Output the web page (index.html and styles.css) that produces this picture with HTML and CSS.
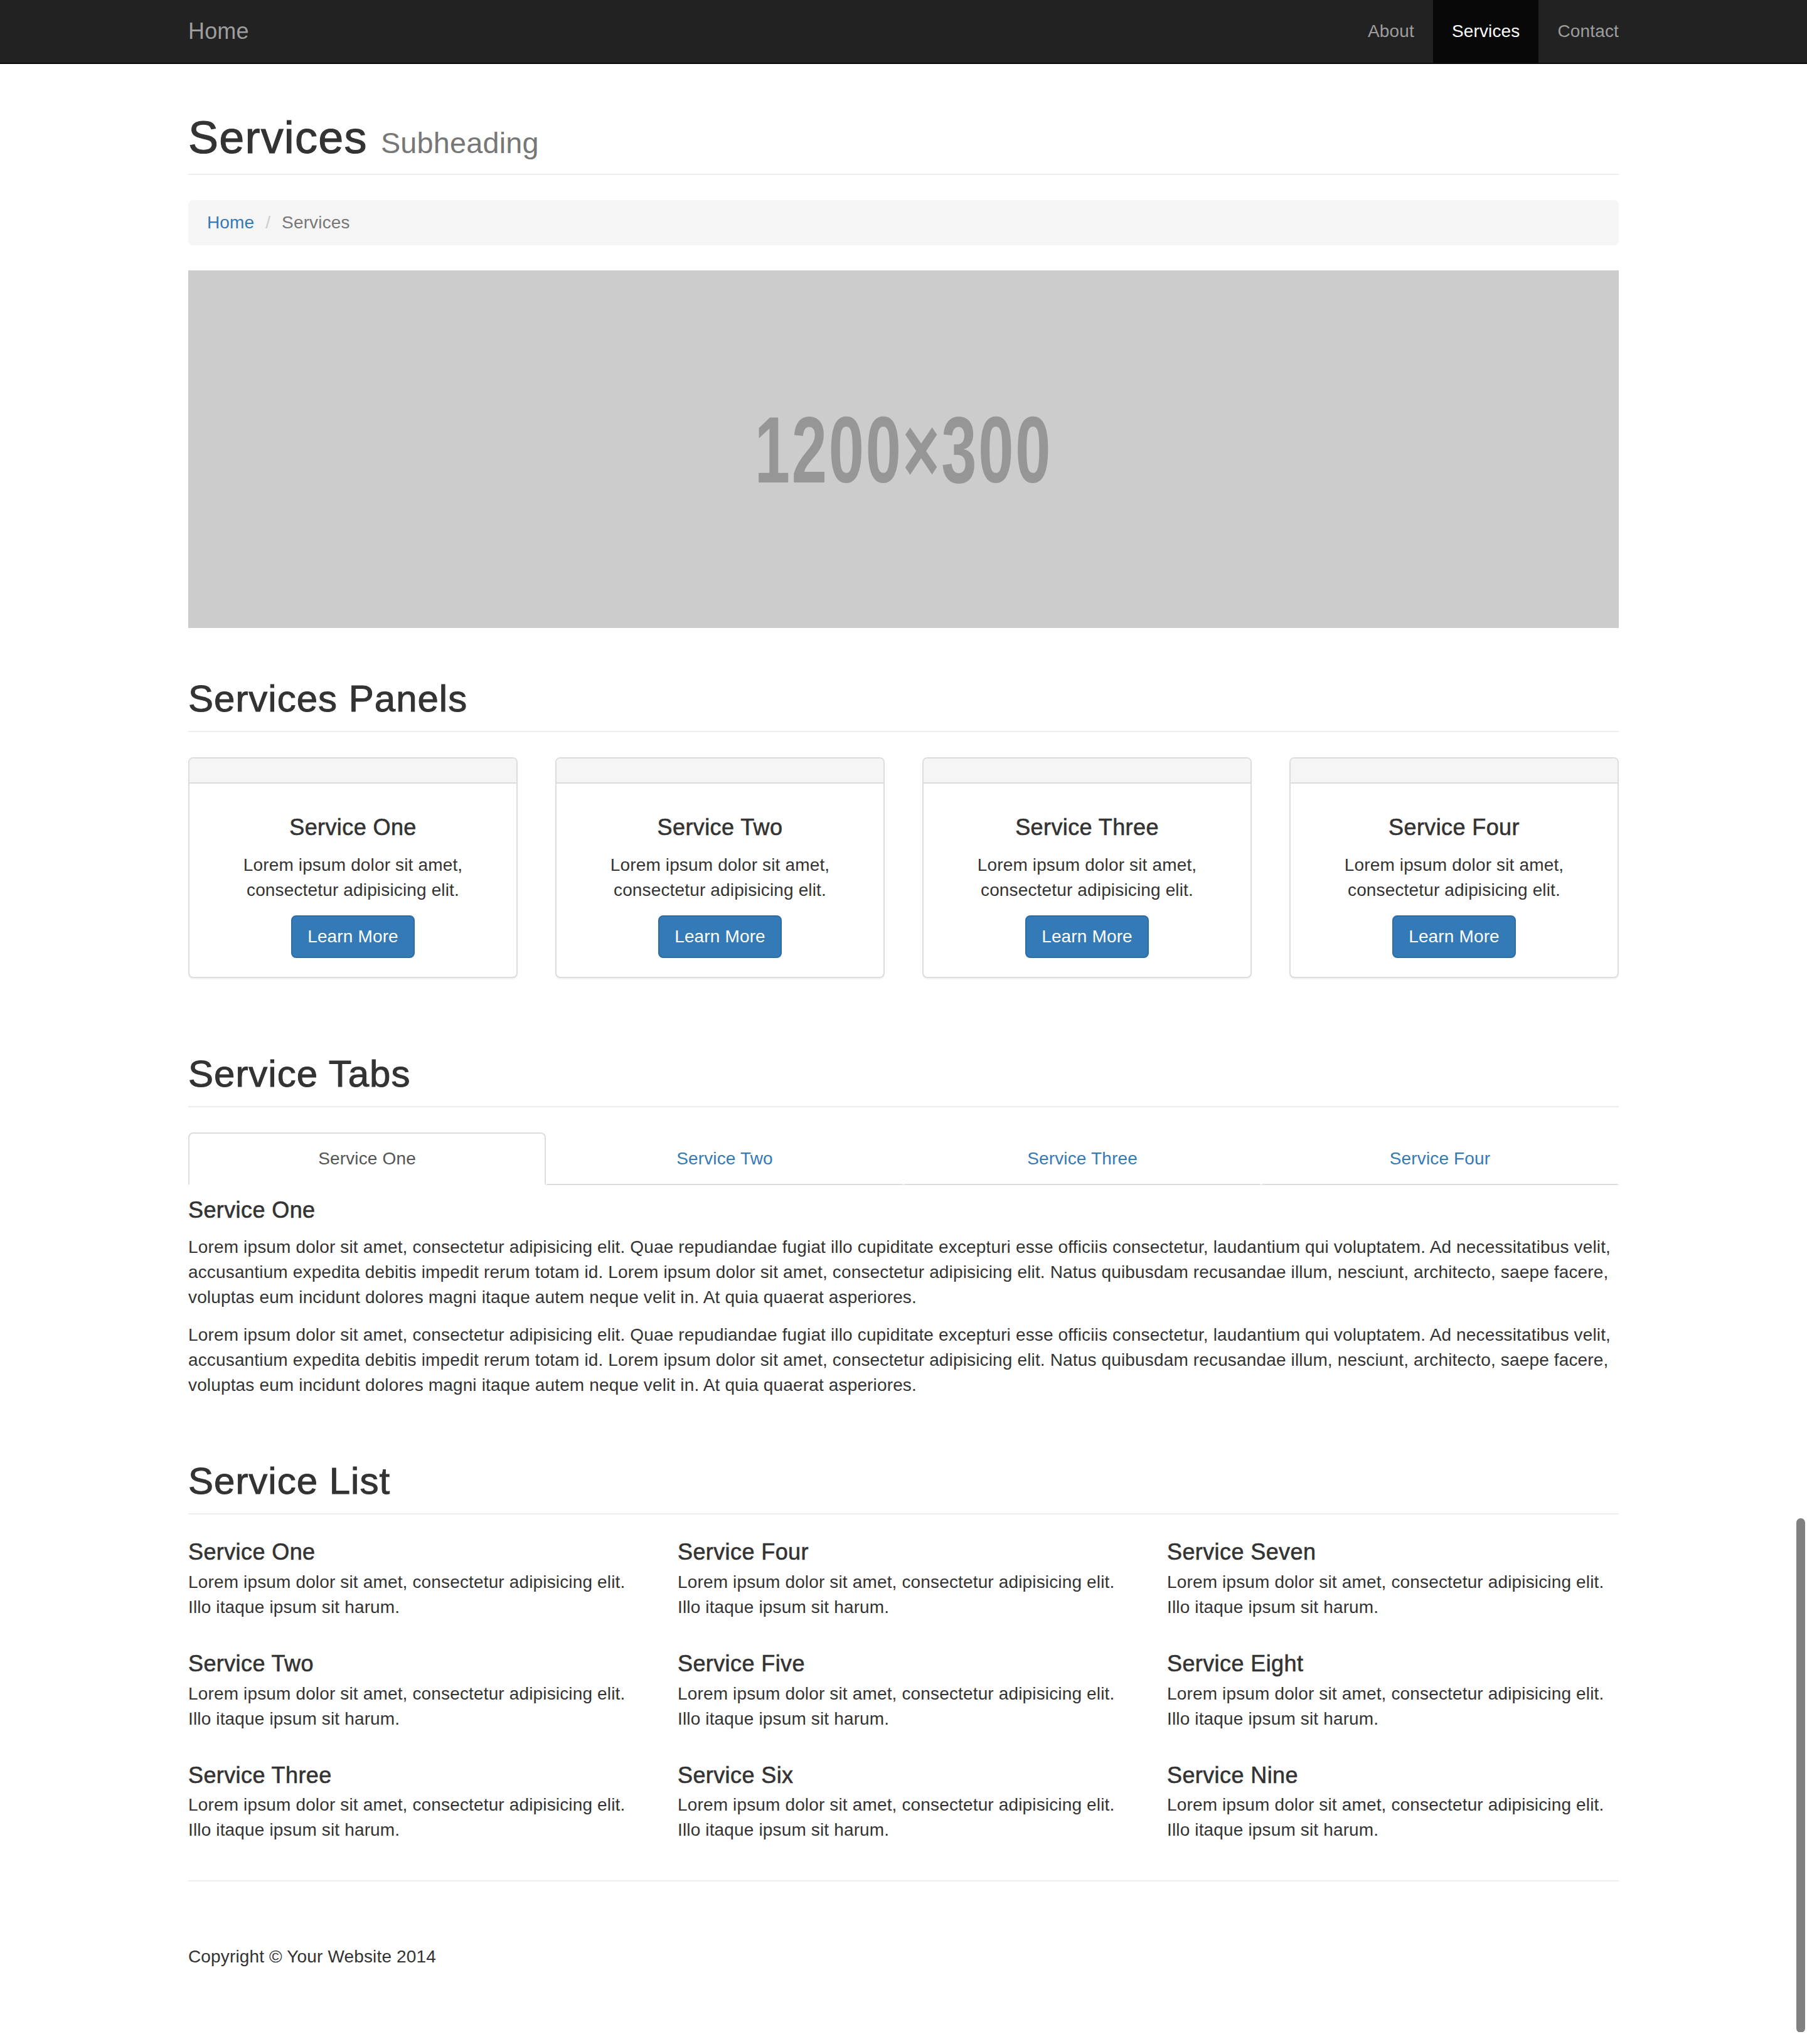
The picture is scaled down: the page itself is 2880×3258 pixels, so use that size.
FILE: index.html
```html
<!DOCTYPE html>
<html lang="en">
<head>
<meta charset="utf-8">
<title>Services</title>
<link rel="stylesheet" href="styles.css">
</head>
<body>
<nav class="navbar">
  <div class="container nav-inner">
    <a class="brand" href="#">Home</a>
    <ul class="nav-links">
      <li><a href="#">About</a></li>
      <li class="active"><a href="#">Services</a></li>
      <li><a href="#">Contact</a></li>
    </ul>
  </div>
</nav>

<div class="container page">
  <section class="row">
    <h1 class="page-header first">Services <small>Subheading</small></h1>
    <ol class="breadcrumb">
      <li><a href="#">Home</a></li>
      <li class="active">Services</li>
    </ol>
  </section>

  <section class="row">
    <div class="placeholder"><span class="ph-text">1200×300</span></div>
  </section>

  <section class="row">
    <h2 class="page-header">Services Panels</h2>
    <div class="panels">
      <div class="panel">
        <div class="panel-heading"></div>
        <div class="panel-body">
          <h4>Service One</h4>
          <p>Lorem ipsum dolor sit amet, consectetur adipisicing elit.</p>
          <a href="#" class="btn">Learn More</a>
        </div>
      </div>
      <div class="panel">
        <div class="panel-heading"></div>
        <div class="panel-body">
          <h4>Service Two</h4>
          <p>Lorem ipsum dolor sit amet, consectetur adipisicing elit.</p>
          <a href="#" class="btn">Learn More</a>
        </div>
      </div>
      <div class="panel">
        <div class="panel-heading"></div>
        <div class="panel-body">
          <h4>Service Three</h4>
          <p>Lorem ipsum dolor sit amet, consectetur adipisicing elit.</p>
          <a href="#" class="btn">Learn More</a>
        </div>
      </div>
      <div class="panel">
        <div class="panel-heading"></div>
        <div class="panel-body">
          <h4>Service Four</h4>
          <p>Lorem ipsum dolor sit amet, consectetur adipisicing elit.</p>
          <a href="#" class="btn">Learn More</a>
        </div>
      </div>
    </div>
  </section>

  <section class="row">
    <h2 class="page-header">Service Tabs</h2>
    <ul class="tabs">
      <li class="active"><a href="#">Service One</a></li>
      <li><a href="#">Service Two</a></li>
      <li><a href="#">Service Three</a></li>
      <li><a href="#">Service Four</a></li>
    </ul>
    <div class="tab-pane">
      <h4>Service One</h4>
      <p>Lorem ipsum dolor sit amet, consectetur adipisicing elit. Quae repudiandae fugiat illo cupiditate excepturi esse officiis consectetur, laudantium qui voluptatem. Ad necessitatibus velit, accusantium expedita debitis impedit rerum totam id. Lorem ipsum dolor sit amet, consectetur adipisicing elit. Natus quibusdam recusandae illum, nesciunt, architecto, saepe facere, voluptas eum incidunt dolores magni itaque autem neque velit in. At quia quaerat asperiores.</p>
      <p>Lorem ipsum dolor sit amet, consectetur adipisicing elit. Quae repudiandae fugiat illo cupiditate excepturi esse officiis consectetur, laudantium qui voluptatem. Ad necessitatibus velit, accusantium expedita debitis impedit rerum totam id. Lorem ipsum dolor sit amet, consectetur adipisicing elit. Natus quibusdam recusandae illum, nesciunt, architecto, saepe facere, voluptas eum incidunt dolores magni itaque autem neque velit in. At quia quaerat asperiores.</p>
    </div>
  </section>

  <section class="row">
    <h2 class="page-header">Service List</h2>
    <div class="svc-list">
      <div class="svc-col">
        <div class="media"><h4>Service One</h4><p>Lorem ipsum dolor sit amet, consectetur adipisicing elit. Illo itaque ipsum sit harum.</p></div>
        <div class="media"><h4>Service Two</h4><p>Lorem ipsum dolor sit amet, consectetur adipisicing elit. Illo itaque ipsum sit harum.</p></div>
        <div class="media"><h4>Service Three</h4><p>Lorem ipsum dolor sit amet, consectetur adipisicing elit. Illo itaque ipsum sit harum.</p></div>
      </div>
      <div class="svc-col">
        <div class="media"><h4>Service Four</h4><p>Lorem ipsum dolor sit amet, consectetur adipisicing elit. Illo itaque ipsum sit harum.</p></div>
        <div class="media"><h4>Service Five</h4><p>Lorem ipsum dolor sit amet, consectetur adipisicing elit. Illo itaque ipsum sit harum.</p></div>
        <div class="media"><h4>Service Six</h4><p>Lorem ipsum dolor sit amet, consectetur adipisicing elit. Illo itaque ipsum sit harum.</p></div>
      </div>
      <div class="svc-col">
        <div class="media"><h4>Service Seven</h4><p>Lorem ipsum dolor sit amet, consectetur adipisicing elit. Illo itaque ipsum sit harum.</p></div>
        <div class="media"><h4>Service Eight</h4><p>Lorem ipsum dolor sit amet, consectetur adipisicing elit. Illo itaque ipsum sit harum.</p></div>
        <div class="media"><h4>Service Nine</h4><p>Lorem ipsum dolor sit amet, consectetur adipisicing elit. Illo itaque ipsum sit harum.</p></div>
      </div>
    </div>
  </section>

  <hr class="divider">

  <footer class="footer">
    <p>Copyright © Your Website 2014</p>
  </footer>
</div>

<div class="scrollbar"></div>
</body>
</html>
```

FILE: styles.css
```css
* {
  box-sizing: border-box;
}

html, body {
  margin: 0;
  padding: 0;
}

body {
  position: relative;
  background: #fff;
  color: #333;
  font-family: "Liberation Sans", Helvetica, Arial, sans-serif;
  font-size: 28px;
  line-height: 40px;
  letter-spacing: 0.15px;
}

a {
  color: #337ab7;
  text-decoration: none;
}

h1, h2, h4 {
  font-family: inherit;
  font-weight: 500;
  color: inherit;
  line-height: 1.1;
}

p {
  margin: 0 0 20px;
}

ul, ol {
  list-style: none;
  margin: 0;
  padding: 0;
}

.container {
  width: 2340px;
  margin: 0 auto;
  padding: 0 30px;
}

/* Navbar */
.navbar {
  background: #222;
  border-bottom: 2px solid #080808;
  height: 102px;
}

.nav-inner {
  display: flex;
  justify-content: space-between;
  align-items: stretch;
}

.brand {
  display: block;
  margin-left: -30px;
  padding: 30px;
  font-size: 36px;
  line-height: 40px;
  color: #9d9d9d;
}

.nav-links {
  display: flex;
  margin-right: -30px;
}

.nav-links a {
  display: block;
  padding: 30px;
  line-height: 40px;
  font-size: 28px;
  color: #9d9d9d;
}

.nav-links .active a {
  background: #080808;
  color: #fff;
}

/* Rows */
.row {
  display: flow-root;
}

.page-header {
  margin: 80px 0 40px;
  padding-bottom: 18px;
  border-bottom: 2px solid #eee;
}

h1.page-header {
  font-size: 72px;
  letter-spacing: 1.2px;
  -webkit-text-stroke: 1.1px #333;
}

h1.page-header.first {
  margin-top: 78px;
}

h1 small {
  font-size: 65%;
  font-weight: 400;
  line-height: 1;
  color: #777;
  letter-spacing: 0.2px;
  -webkit-text-stroke: 0;
}

h2.page-header {
  font-size: 60px;
  letter-spacing: 1px;
  -webkit-text-stroke: 1px #333;
}

h4 {
  font-size: 36px;
  margin: 20px 0;
  letter-spacing: 0.4px;
  -webkit-text-stroke: 0.6px #333;
}

/* Breadcrumb */
.breadcrumb {
  padding: 16px 30px;
  margin-bottom: 40px;
  background: #f5f5f5;
  border-radius: 8px;
}

.breadcrumb li {
  display: inline-block;
}

.breadcrumb li + li::before {
  content: "/\00a0";
  padding: 0 10px;
  color: #ccc;
}

.breadcrumb .active {
  color: #777;
}

/* Placeholder image */
.placeholder {
  height: 570px;
  background: #ccc;
  display: flex;
  align-items: center;
  justify-content: center;
}

.ph-text {
  display: block;
  font-size: 151px;
  line-height: 1;
  font-weight: 700;
  letter-spacing: 4px;
  color: #969696;
  transform: scaleX(0.67);
}

/* Panels */
.panels {
  display: grid;
  grid-template-columns: repeat(4, 1fr);
  column-gap: 60px;
}

.panel {
  margin-bottom: 40px;
  border: 2px solid #ddd;
  border-radius: 8px;
  background: #fff;
  box-shadow: 0 2px 2px rgba(0, 0, 0, 0.05);
  text-align: center;
  overflow: hidden;
}

.panel-heading {
  height: 40px;
  background: #f5f5f5;
  border-bottom: 2px solid #ddd;
}

.panel-body {
  padding: 30px;
}

.btn {
  display: inline-block;
  padding: 12px 24px;
  font-size: 28px;
  line-height: 40px;
  color: #fff;
  background: #337ab7;
  border: 2px solid #2e6da4;
  border-radius: 8px;
}

/* Tabs */
.tabs {
  display: flex;
}

.tabs li {
  flex: 1 1 0;
}

.tabs a {
  display: block;
  padding: 20px 30px;
  line-height: 40px;
  text-align: center;
  border: 2px solid transparent;
  border-bottom-color: #ddd;
  border-radius: 8px 8px 0 0;
}

.tabs .active a {
  color: #555;
  background: #fff;
  border-color: #ddd;
  border-bottom-color: #fff;
}

.tab-pane h4 {
  margin: 20px 0;
}

/* Service list */
.svc-list {
  display: grid;
  grid-template-columns: repeat(3, 1fr);
  column-gap: 60px;
}

.media {
  overflow: hidden;
  margin-top: 30px;
}

.media:first-child {
  margin-top: 0;
}

.media h4 {
  margin: 0 0 8px;
}

/* Footer */
.divider {
  margin: 40px 0;
  border: 0;
  border-top: 2px solid #eee;
}

.footer {
  margin: 100px 0;
}

.scrollbar {
  position: absolute;
  top: 2420px;
  right: 3px;
  width: 14px;
  height: 820px;
  border-radius: 7px;
  background: #808080;
}
```
